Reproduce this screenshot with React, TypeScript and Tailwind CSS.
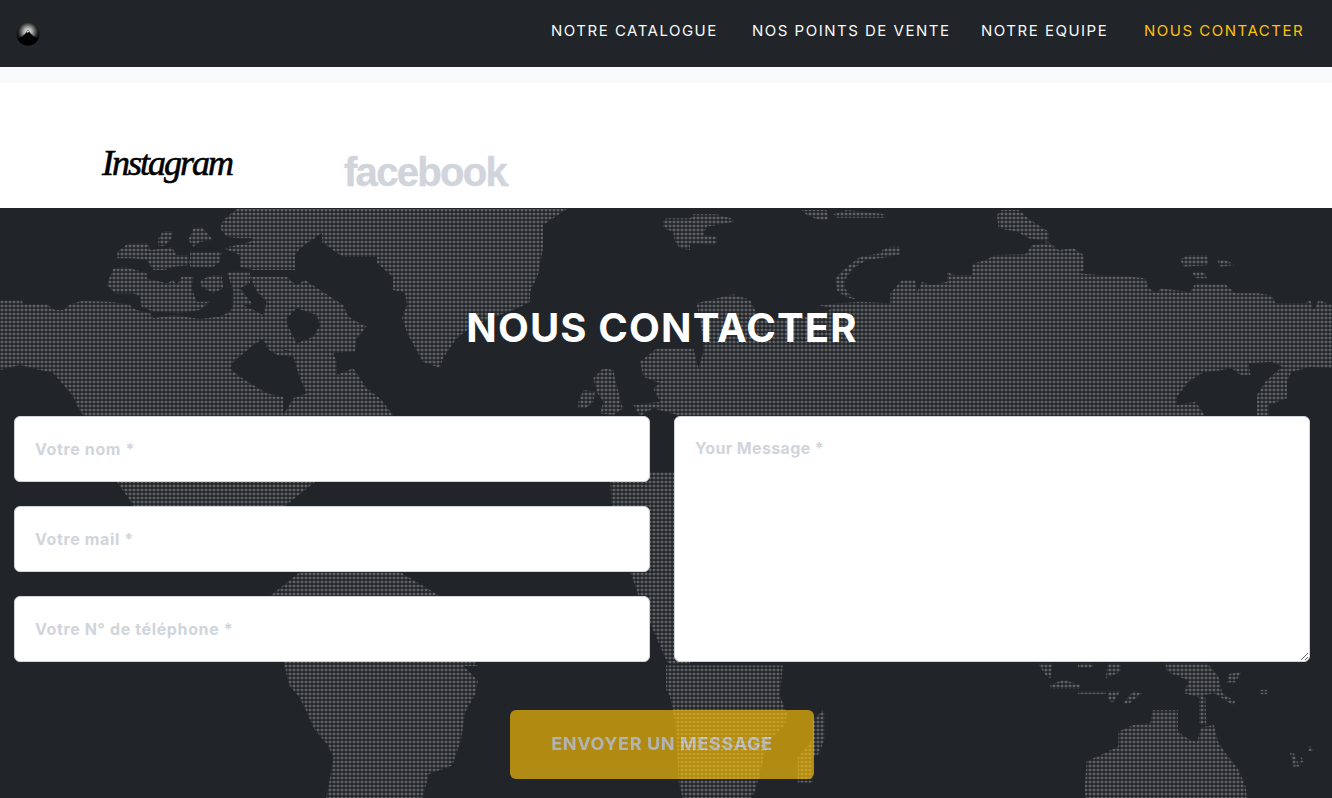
import React from "react";

// turns coordinates read off a zoomed crop into page coordinates
const place = (ox: number, oy: number, s: number, pts: string) =>
  pts
    .split(" ")
    .map((p) => {
      const [x, y] = p.split(",").map(Number);
      return `${ox + x / s},${oy + y / s}`;
    })
    .join(" ");

const left = (pts: string) => place(0, 205, 3, pts);
const mid = (pts: string) => place(440, 205, 3, pts);
const right = (pts: string) => place(882, 205, 3, pts);
const south = (pts: string) => place(0, 655, 2.354, pts);
const east = (pts: string) => place(666, 655, 2.354, pts);

const land = [
  // north america
  left("0,285 65,285 70,298 140,298 165,315 190,315 210,298 245,288 330,290 385,298 410,315 450,325 460,340 520,330 600,342 655,335 690,320 700,300 730,300 790,330 795,400 760,420 700,470 690,490 720,515 760,540 800,565 850,575 850,630 250,630 240,620 220,575 190,540 160,505 100,490 60,480 0,495"),
  left("320,240 340,190 375,185 440,205 440,220 500,235 520,225 530,240 545,215 580,215 575,250 590,290 630,290 600,315 540,325 460,320 425,305 420,275 400,265 345,265"),
  left("352,140 385,115 445,115 450,135 500,130 515,125 530,150 565,150 570,180 520,185 495,195 460,195 440,165 400,160 352,160"),
  left("570,140 665,140 660,170 640,185 570,185"),
  left("565,105 580,70 605,65 640,105 600,110 580,125"),
  left("475,100 490,78 520,78 515,100 495,122 475,122"),
  left("670,45 710,12 1040,12 1040,40 985,70 965,85 900,130 885,150 885,195 760,195 720,185 720,150 670,130 750,110 760,100 720,100 680,95 660,70"),
  left("680,200 750,200 750,235 720,250 760,300 700,300 700,255"),
  left("600,225 640,210 665,210 670,250 640,265 605,245"),
  left("750,215 860,215 890,240 915,225 975,265 1030,300 1045,335 1100,365 1070,400 1065,440 1000,445 950,420 890,415 940,395 960,360 950,330 890,310 860,340 860,355 810,365 790,330 800,290 770,260"),
  left("790,330 860,355 890,415 950,420 1000,445 1010,470 905,460 880,440 830,430 790,410"),
  left("800,410 860,440 905,445 950,450 1010,470 1010,510 1060,490 1100,550 1140,580 1180,630 850,630 880,580 920,565 900,520 880,455 830,450 800,430"),
  "83,415 393,415 330,470 280,510 250,540 170,540 133,505 117,482",
  // greenland
  "322,233 347,209 567,209 543,225 543,248 538,275 530,292 530,302 520,307 500,315 483,322 470,328 457,338 443,358 440,368 423,362 408,335 402,318 407,305 405,293 393,290 393,277 377,263 377,257 343,257 330,248 322,242",
  // iceland, svalbard, norway arc
  mid("670,45 680,40 750,40 760,28 830,28 880,42 880,50 830,60 800,65 790,90 830,95 830,120 750,115 750,135 720,130 705,110 700,80 670,70"),
  mid("1085,15 1160,15 1165,45 1130,42 1100,30"),
  mid("1180,28 1220,15 1335,28 1335,38 1190,38"),
  mid("1350,140 1260,155 1210,195 1185,220 1190,255 1215,275 1250,285 1230,270 1215,250 1215,225 1240,190 1280,165 1350,155"),
  // uk, ireland
  mid("460,520 490,490 520,495 525,520 545,600 550,610 520,630 480,625 490,590 470,560"),
  mid("415,590 430,555 465,560 460,590 440,610 415,610"),
  // europe
  mid("770,295 880,268 930,285 960,345 1120,335 1180,310 1135,300 1260,290 1350,295 1350,632 720,632 640,610 600,632 580,600 660,590 640,550 660,535 610,515 600,470 650,430 760,430 775,490 790,440 790,400"),
  // asia
  right("0,310 25,300 25,265 60,225 100,225 105,260 120,230 150,240 195,230 195,200 215,210 270,210 270,178 310,165 340,150 430,148 450,120 500,112 530,135 575,130 605,150 605,195 590,205 670,212 720,212 790,220 800,250 825,265 835,250 925,262 940,235 1030,238 1060,265 1130,265 1170,272 1180,295 1270,295 1285,285 1295,315 1310,285 1350,300 1350,490 1290,485 1230,500 1170,470 1100,475 1105,510 1075,510 1050,490 960,505 920,530 885,575 885,600 940,590 970,632 0,632"),
  right("1195,490 1230,495 1215,530 1215,580 1160,600 1160,632 1125,632 1125,570 1150,530"),
  right("345,30 360,15 410,15 445,45 500,80 500,110 440,100 405,80 350,70"),
  right("0,135 25,125 55,125 55,148 0,158"),
  right("895,165 915,150 975,150 980,180 905,185"),
  right("1005,165 1030,165 1060,180 1015,185"),
  right("930,200 965,200 975,220 940,220"),
  // africa in the gap between the columns
  "610,472 690,472 690,664 668,664 640,600 612,520",
  // south america
  "270,596 300,572 400,572 440,596 478,666 284,666",
  south("670,25 1090,25 1125,60 1120,90 1095,135 1085,200 1065,260 1010,280 990,350 970,390 945,435 765,435 765,350 775,300 785,240 770,210 740,175 720,130 705,100 680,70"),
  // southern africa, madagascar
  east("0,25 275,25 268,95 285,140 280,165 250,195 235,225 210,320 185,360 170,390 130,420 75,425 55,380 40,340 30,300 25,200 20,150 10,100 0,80"),
  east("368,130 373,135 373,200 358,235 345,240 345,300 310,300 310,240 345,200 345,155"),
  // indonesia and around
  east("875,20 910,20 905,55 895,50"),
  east("905,70 935,58 975,70 975,80 905,80"),
  east("970,85 1035,85 1035,92 970,92"),
  east("1040,85 1070,85 1050,115 1040,100"),
  east("1075,115 1100,85 1120,90 1090,115"),
  east("970,20 1005,20 1005,30 970,30"),
  east("1040,20 1070,20 1070,40 1035,55"),
  east("1175,20 1275,20 1300,50 1310,90 1340,110 1335,118 1290,90 1265,95 1270,120 1255,100 1220,90 1230,60 1180,40"),
  east("1325,45 1355,40 1340,65 1320,65"),
  east("1398,82 1415,82 1415,92 1398,92"),
  east("1255,100 1270,100 1272,165 1255,165"),
  // australia
  east("1065,180 1100,165 1140,160 1145,130 1205,130 1205,180 1225,195 1250,205 1260,170 1290,165 1300,205 1320,235 1345,265 1365,310 1368,350 1340,385 1320,435 1190,435 1190,400 1110,395 1080,435 1000,435 995,370 985,320 990,250 1035,230 1065,215"),
  // new zealand
  east("1468,228 1478,232 1492,262 1478,264"),
  east("1495,240 1502,250 1490,256"),
  east("1513,216 1522,216 1522,226 1513,226"),
];

function WorldMap() {
  return (
    <svg className="absolute left-0 top-0" width="1332" height="590" viewBox="0 208 1332 590">
      <defs>
        <pattern id="dots" x="0" y="0" width="4" height="4" patternUnits="userSpaceOnUse">
          <rect x="0.7" y="0.7" width="2.6" height="2.6" rx="0.5" fill="#5f6164" />
        </pattern>
        <clipPath id="land">
          {land.map((points, i) => (
            <polygon key={i} points={points} />
          ))}
        </clipPath>
      </defs>
      <rect x="0" y="208" width="1332" height="590" fill="url(#dots)" clipPath="url(#land)" />
    </svg>
  );
}

function Logo() {
  return (
    <svg width="24" height="24" viewBox="0 0 24 24">
      <defs>
        <radialGradient id="glow" cx="50%" cy="40%" r="52%">
          <stop offset="0%" stopColor="#ffffff" />
          <stop offset="35%" stopColor="#a8a8a8" />
          <stop offset="75%" stopColor="#2c2c2c" />
          <stop offset="100%" stopColor="#0a0a0a" />
        </radialGradient>
      </defs>
      <circle cx="12" cy="12" r="11.5" fill="url(#glow)" />
      <path d="M1.5 16.5 L6 14.5 L9 12 L12 7.5 L15 12 L18 14.5 L22.5 16.5 A11.5 11.5 0 0 1 1.5 16.5Z" fill="#000000" />
      <path d="M10.6 10.5 L12 8 L13.4 10.5 L12.5 10 L11.5 10.8Z" fill="#ffffff" />
    </svg>
  );
}

const navItems = [
  { label: "NOTRE CATALOGUE", className: "w-[168px] text-[#f8f9fa]" },
  { label: "NOS POINTS DE VENTE", className: "w-[196px] text-[#f8f9fa]" },
  { label: "NOTRE EQUIPE", className: "w-[130px] text-[#f8f9fa]" },
  { label: "NOUS CONTACTER", className: "w-[158px] text-[#ffc107]" },
];

const inputClass =
  "w-full h-[66px] px-[20px] bg-white rounded-[6px] border border-[#ced4da] text-[16px] font-bold placeholder:text-[#d1d5db] tracking-[0.62px] outline-none";

export default function App() {
  return (
    <div className="h-[798px] overflow-hidden bg-white font-['Inter',sans-serif]">
      <nav className="h-[67px] bg-[#212529] flex items-center justify-between pl-[16px] pr-[30px]">
        <Logo />
        <ul className="flex gap-[33px] pb-[5px] text-[15px] font-normal tracking-[1.5px]">
          {navItems.map((item) => (
            <li key={item.label} className={`whitespace-nowrap ${item.className}`}>
              {item.label}
            </li>
          ))}
        </ul>
      </nav>

      <div className="h-[16px] bg-[#f8f9fa]" />

      <div className="h-[125px] bg-white flex items-start pl-[102px] gap-[112px]">
        <span className="w-[130px] mt-[52px] whitespace-nowrap font-['Liberation_Serif',serif] italic text-[36px] leading-[56px] tracking-[-2px] text-black [-webkit-text-stroke:0.6px_#000]">
          Instagram
        </span>
        <span className="mt-[61px] whitespace-nowrap font-['Liberation_Sans',sans-serif] font-bold text-[40px] leading-[56px] tracking-[-1.7px] text-[#d1d5db] [-webkit-text-stroke:0.5px_#d1d5db]">
          facebook<span className="text-[12px] tracking-normal">.</span>
        </span>
      </div>

      <section className="relative h-[590px] bg-[#212529]">
        <WorldMap />
        <div className="relative pt-[96px] pl-[14px] pr-[22px]">
          <h2 className="text-center text-[40px] leading-[48px] font-bold tracking-[1.15px] text-white mb-[64px]">
            NOUS CONTACTER
          </h2>
          <form className="flex flex-col items-center">
            <div className="w-full grid grid-cols-2 gap-[24px]">
              <div className="flex flex-col gap-[24px]">
                <input className={inputClass} placeholder="Votre nom *" />
                <input className={inputClass} placeholder="Votre mail *" />
                <input className={inputClass} placeholder="Votre N° de téléphone *" />
              </div>
              <textarea
                className="w-full h-[246px] px-[20px] pt-[19px] bg-white rounded-[6px] border border-[#ced4da] text-[16px] leading-[24px] font-bold placeholder:text-[#d1d5db] tracking-[0.35px] outline-none"
                placeholder="Your Message *"
              />
            </div>
            <button
              type="button"
              className="mt-[48px] w-[304px] h-[69px] pb-[2px] rounded-[6px] bg-[#ffc107] opacity-65 text-white text-[18px] font-bold tracking-[0.65px]"
            >
              ENVOYER UN MESSAGE
            </button>
          </form>
        </div>
      </section>
    </div>
  );
}
